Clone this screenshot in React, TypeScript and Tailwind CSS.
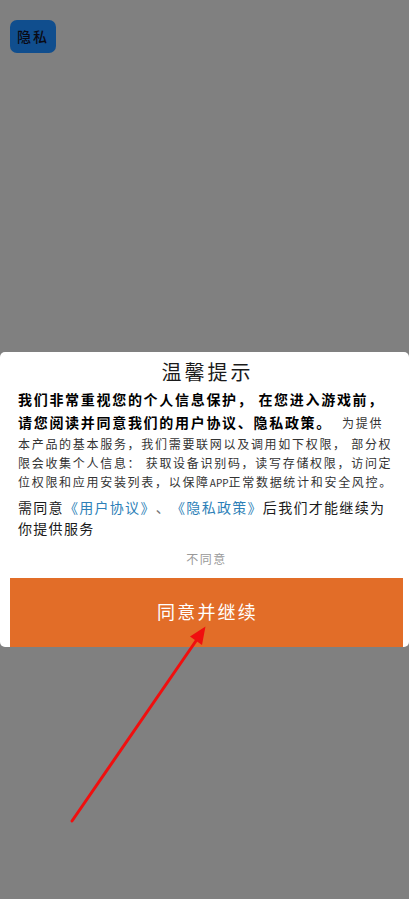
const cjk = "font-['Noto_Sans_CJK_SC','Noto_Sans_CJK_JP',sans-serif] [text-spacing-trim:space-all]";

export default function App() {
  return (
    <div className={`relative h-[899px] w-full overflow-hidden bg-[#808080] ${cjk}`}>
      <div className="flex flex-col px-[10px] pt-[20px]">
        <button className="flex h-[33px] w-[46px] items-center justify-center rounded-[7px] bg-[#104e8e] text-[14px] font-medium tracking-[2px] text-[#0a0a14]">
          隐私
        </button>
      </div>

      <div className="mt-[299px] flex h-[295px] flex-col overflow-hidden rounded-[5px] bg-white">
        <h1 className="mt-[5px] pl-[6px] text-center text-[20px] leading-[29px] font-normal tracking-[3px] text-[#1a1a1a]">
          温馨提示
        </h1>

        <p className="mt-[2px] pl-[18px] text-[12px] leading-[19px] tracking-[1.7px] whitespace-nowrap text-[#333333]">
          <span className="text-[14px] leading-[23px] font-bold tracking-[1.7px] text-black">
            我们非常重视您的个人信息保护， 在您进入游戏前，
            <br />
            请您阅读并同意我们的用户协议、隐私政策。
          </span>
          <span className="ml-[10px]">为提供</span>
          <br />
          本产品的基本服务，我们需要联网以及调用如下权限， 部分权
          <br />
          限会收集个人信息： 获取设备识别码，读写存储权限，访问定
          <br />
          位权限和应用安装列表，以保障<span className="text-[10px] tracking-[0px]">APP</span>正常数据统计和安全风控。
        </p>

        <p className="mt-[5px] pl-[18px] text-[14px] leading-[21px] tracking-[1.3px] whitespace-nowrap text-[#1a1a1a]">
          需同意<span className="text-[#2d7fb8]">《用户协议》</span>
          <span className="text-[#777777]">、</span>
          <span className="text-[#2d7fb8]">《隐私政策》</span>后我们才能继续为
          <br />
          你提供服务
        </p>

        <button className="mt-[10px] pl-[4px] text-center text-[12px] leading-[20px] tracking-[1.5px] text-[#999999]">
          不同意
        </button>

        <div className="mt-[9px] ml-[10px] flex h-[80px] w-[393px] shrink-0 items-start justify-center bg-[#e26d28] pt-[20px] pl-[2px] text-[18px] leading-[26px] tracking-[2.2px] text-white">
          同意并继续
        </div>
      </div>

      <svg className="absolute top-0 left-0" width="409" height="899" viewBox="0 0 409 899" fill="none">
        <line x1="72" y1="821" x2="198" y2="638" stroke="#f00f0f" strokeWidth="3" strokeLinecap="round" />
        <path d="M205.500 626.500 L202 645 L190 636.500 Z" fill="#f00f0f" />
      </svg>
    </div>
  );
}
